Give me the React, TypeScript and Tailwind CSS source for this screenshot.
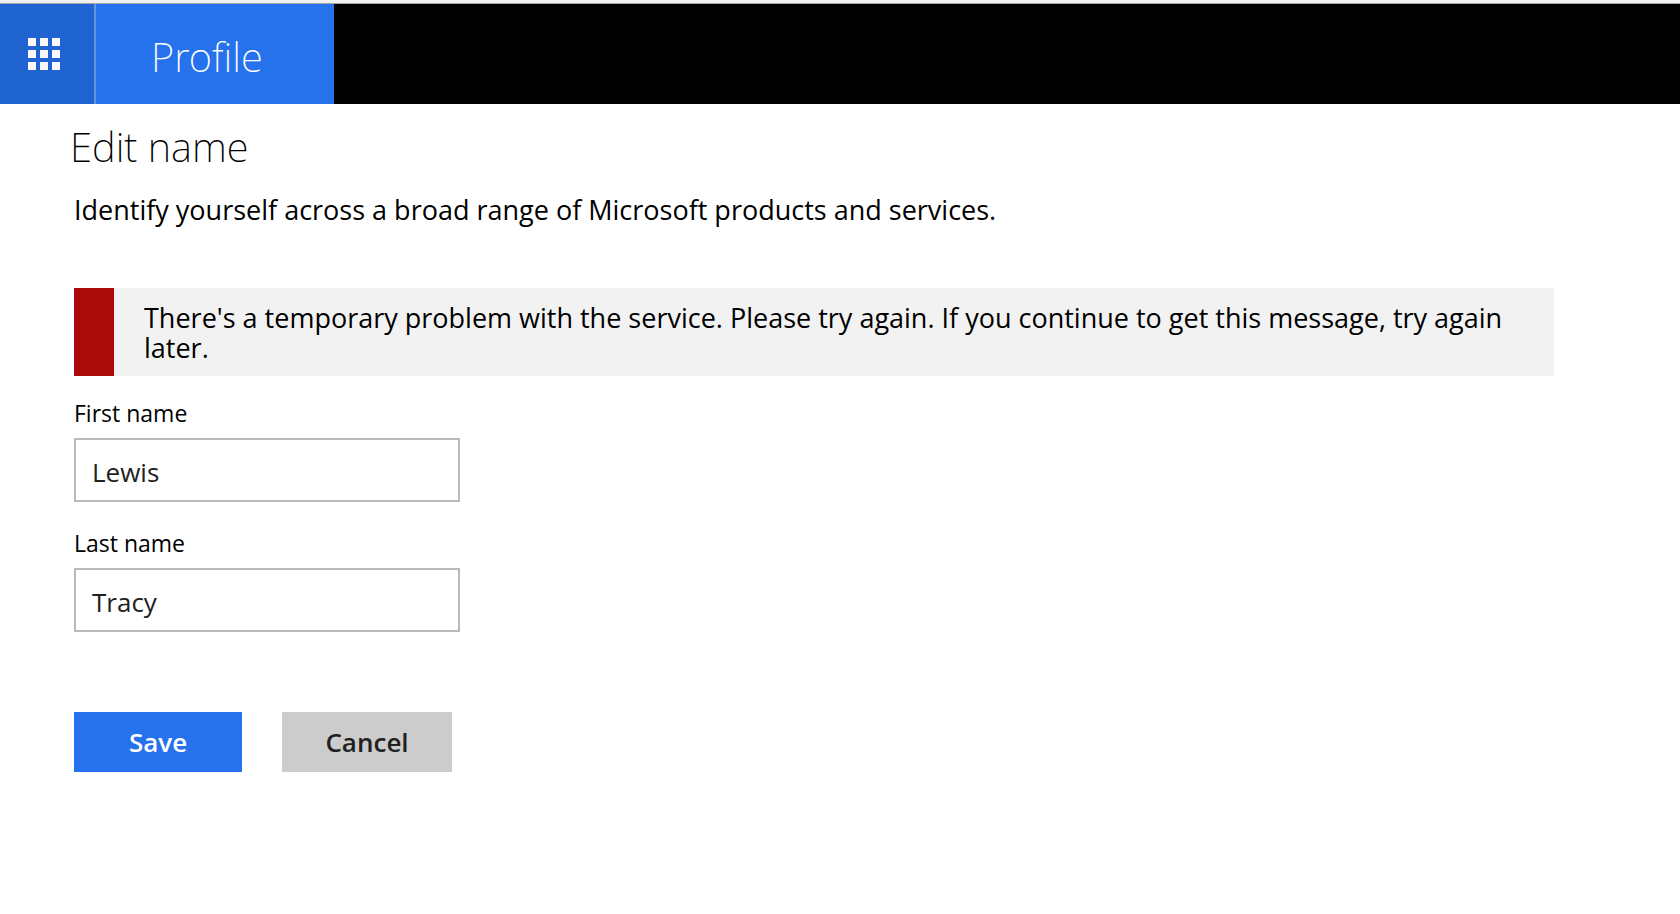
const sans = "font-['Segoe_UI','Open_Sans',sans-serif]";
const light = "font-['Segoe_UI_Light','Noto_Sans',sans-serif] text-[40px] font-extralight";

function Field({ id, label, value }: { id: string; label: string; value: string }) {
  return (
    <div className="flex flex-col items-start gap-[9px]">
      <label htmlFor={id} className="text-[23px] leading-[31px] text-black">{label}</label>
      <input
        id={id}
        type="text"
        defaultValue={value}
        className="h-16 w-full max-w-[386px] border-2 border-[#bababa] bg-white px-4 pt-1 text-[26px] leading-8 text-[#212121]"
      />
    </div>
  );
}

export default function App() {
  return (
    <div className={`min-h-screen bg-white text-black ${sans}`}>
      <div className="h-1 border-b border-[#a5a5a5] bg-[#f0f0f0]" />
      <header className="flex h-[100px] bg-black">
        <button type="button" aria-label="App launcher" className="flex w-24 items-center border-r-2 border-[#6594de] bg-[#2064d1] pl-7">
          <svg width="32" height="32" viewBox="0 0 32 32" fill="#f8f8f8" aria-hidden="true">
            {[0, 12, 24].map((y) => [0, 12, 24].map((x) => <rect key={`${x}-${y}`} x={x} y={y} width="8" height="8" />))}
          </svg>
        </button>
        <a href="#" className={`flex w-[238px] items-center bg-[#2672ec] pt-1.5 pl-[55px] text-white ${light}`}>Profile</a>
      </header>
      <main className="pl-[74px] pr-[126px]">
        <h1 className={`-ml-1 pt-4 leading-[54px] ${light}`}>Edit name</h1>
        <p className="pt-[18px] text-[27px] leading-9">Identify yourself across a broad range of Microsoft products and services.</p>
        <div role="alert" className="mt-[60px] flex bg-[#f2f2f2]">
          <div className="w-10 shrink-0 bg-[#ac0b0b]" />
          <p className="px-[30px] pt-[15px] pb-[13px] text-[27px] leading-[30px]">There's a temporary problem with the service. Please try again. If you continue to get this message, try again later.</p>
        </div>
        <form className="pt-[22px]" onSubmit={(e) => e.preventDefault()}>
          <div className="flex flex-col gap-[26px]">
            <Field id="first" label="First name" value="Lewis" />
            <Field id="last" label="Last name" value="Tracy" />
          </div>
          <div className="mt-20 flex gap-10">
            <button type="submit" className="h-[60px] w-[168px] bg-[#2672ec] text-[26px] font-semibold text-white">Save</button>
            <button type="button" className="h-[60px] w-[170px] bg-[#cccccc] text-[26px] font-semibold text-[#212121]">Cancel</button>
          </div>
        </form>
      </main>
    </div>
  );
}
